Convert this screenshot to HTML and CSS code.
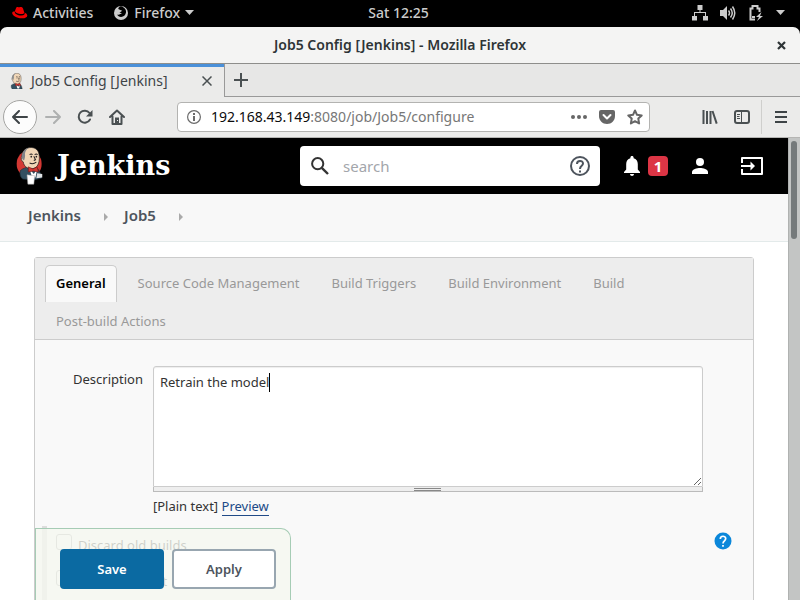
FILE: index.html
```html
<!DOCTYPE html>
<html lang="en">
<head>
<meta charset="utf-8">
<title>Job5 Config [Jenkins]</title>
<link rel="stylesheet" href="styles.css">
</head>
<body>
<header class="topbar">
  <div class="topbar-left">
    <button class="top-item activities" type="button">
      <svg width="16" height="16" viewBox="0 0 16 16"><path fill="#e00" d="M4 3.2c.5-1.600 1.700-1.400 3-.8 1.500-.6 3.300-.4 4 1l1.300 4.200c-.5 1.900-3.200 1.700-5.500 1.100C4.700 8.100 2.700 7 3 5.700z"/><path fill="#e00" d="M2.700 6.200c-1.500.2-2.500.6-2.500 1.700 0 2.300 4.200 5.200 9.600 5.400 3.200.1 5.500-.9 5.500-2.800 0-1.300-1.100-2.300-2.700-3.100.4 1.600-.5 3.200-3.600 3.100-3.500-.1-6.600-1.900-6.300-4.300z"/></svg>
      Activities
    </button>
    <button class="top-item" type="button">
      <svg width="16" height="16" viewBox="0 0 16 16"><circle cx="8" cy="8" r="7" fill="#ccc"/><path fill="#000" d="M7 1.500c1.500-.4 2.500 0 3.200.7 2 1 3.200 3 2.800 5.400-.4 2.700-2.400 4.400-4.900 4.400-2 0-3.300-1-4-2.400 1.300.5 2.300.3 3.100-.5l1.600-.4c-.4-.7-1.400-.8-2.300-1l1.700-1.200 1-.8-1.800-.6C6.600 4.600 5.800 4 5.300 3.900c0-1 .7-1.900 1.700-2.400z"/></svg>
      Firefox
      <svg width="9" height="5" viewBox="0 0 9 5"><path fill="#ccc" d="M0 0h9L4.500 5z"/></svg>
    </button>
  </div>
  <div class="clock">Sat 12:25</div>
  <button class="tray" type="button" aria-label="System menu">
    <svg width="16" height="16" viewBox="0 0 16 16"><path fill="#ccc" d="M5.500 0h5v5H8.500v2H14v4h2v4.500h-5V11h2V8H3v3h2v4.500H0V11h2V7h5.500V5h-2z"/></svg>
    <svg width="16" height="16" viewBox="0 0 16 16"><path fill="#ccc" d="M0 5h3l4-4v14l-4-4H0z"/><path fill="none" stroke="#ccc" stroke-width="1.500" d="M8.500 5.500q2 2.500 0 5M10.500 3.500q3.500 4.500 0 9M12.500 1.500q4.500 6.500 0 13"/></svg>
    <svg width="16" height="16" viewBox="0 0 16 16"><path fill="none" stroke="#ccc" stroke-width="2" d="M7 14.500H2.500v-11h2V1h5v2.500h2V7"/><path fill="#ccc" d="M13.500 7 8 12h3l-2 4 6-5h-3zM4 11h3v2H4z"/></svg>
    <svg width="9" height="5" viewBox="0 0 9 5"><path fill="#ccc" d="M0 0h9L4.500 5z"/></svg>
  </button>
</header>

<div class="titlebar">
  <span></span>
  <div class="window-title">Job5 Config [Jenkins] - Mozilla Firefox</div>
  <button class="close-window" type="button" aria-label="Close window"><svg width="9" height="9" viewBox="0 0 9 9"><path stroke="#2e3436" stroke-width="2.200" d="M1 1l7 7M8 1 1 8"/></svg></button>
</div>

<div class="tabstrip">
  <div class="browser-tab">
    <svg width="16" height="16" viewBox="3 0 30 37"><use href="#butler"/></svg>
    <span class="tab-name">Job5 Config [Jenkins]</span>
    <button type="button" aria-label="Close tab"><svg width="10" height="10" viewBox="0 0 10 10"><path stroke="#4a5052" stroke-width="1.500" d="M.5.5l9 9M9.500.5l-9 9"/></svg></button>
  </div>
  <button class="new-tab" type="button" aria-label="New tab"><svg width="14" height="14" viewBox="0 0 14 14"><path stroke="#4a5052" stroke-width="2" d="M7 0v14M0 7h14"/></svg></button>
</div>

<nav class="toolbar">
  <div class="nav-buttons">
    <button class="back" type="button" aria-label="Back"><svg width="16" height="14" viewBox="0 0 16 14"><path fill="none" stroke="#3e4447" stroke-width="2" stroke-linecap="round" stroke-linejoin="round" d="M7 1 1 7l6 6M1 7h14"/></svg></button>
    <button class="forward" type="button" aria-label="Forward"><svg width="16" height="14" viewBox="0 0 16 14"><path fill="none" stroke="#aeb0b0" stroke-width="2" stroke-linecap="round" stroke-linejoin="round" d="M9 1l6 6-6 6M15 7H1"/></svg></button>
    <button type="button" aria-label="Reload"><svg width="16" height="16" viewBox="0 0 16 16"><path fill="none" stroke="#4a5052" stroke-width="2" stroke-linecap="round" d="M13 10.500A6 6 0 1 1 12.500 4"/><path fill="#4a5052" d="M15.500 1v6.500H9z"/></svg></button>
    <button type="button" aria-label="Home"><svg width="16" height="16" viewBox="0 0 16 16"><path fill="none" stroke="#4a5052" stroke-width="2" stroke-linecap="round" stroke-linejoin="round" d="M1 8l7-6.500L15 8M3.500 7.500V15h9V7.500"/><path fill="#4a5052" d="M6 8.500h4V15H6z"/><path fill="#ebebea" d="M8 11h1v1H8z"/></svg></button>
  </div>
  <div class="urlbar">
    <svg width="14" height="14" viewBox="0 0 14 14"><circle cx="7" cy="7" r="6.400" fill="none" stroke="#6b6b6b" stroke-width="1.200"/><path fill="#6b6b6b" d="M6 6h2v5H6zM6 3h2v2H6z"/></svg>
    <div class="url">192.168.43.149<span>:8080/job/Job5/configure</span></div>
    <svg width="16" height="4" viewBox="0 0 16 4"><g fill="#666"><circle cx="2" cy="2" r="2"/><circle cx="8" cy="2" r="2"/><circle cx="14" cy="2" r="2"/></g></svg>
    <svg width="16" height="14" viewBox="0 0 16 14"><path fill="#666" d="M2 0h12q2 0 2 2v4c0 4.500-3.500 8-8 8S0 10.500 0 6V2q0-2 2-2z"/><path fill="none" stroke="#fff" stroke-width="2" stroke-linecap="round" stroke-linejoin="round" d="M4.500 5 8 8.500 11.500 5"/></svg>
    <svg width="16" height="16" viewBox="0 0 16 16"><path fill="none" stroke="#666" stroke-width="2" stroke-linejoin="round" d="M8 1.500l2 4.300 4.700.6-3.400 3.200.8 4.900L8 12.200l-4.100 2.300.8-4.900L1.300 6.400 6 5.800z"/></svg>
  </div>
  <div class="tools">
    <svg width="16" height="14" viewBox="0 0 16 14"><path fill="none" stroke="#4a5052" stroke-width="2" d="M1.500 0v14M5 1v13M8.500 1v13M10.500 1l4.200 12.600"/></svg>
    <svg width="16" height="14" viewBox="0 0 16 14"><rect x="1" y="1" width="14" height="12" rx="2" fill="none" stroke="#4a5052" stroke-width="2"/><path fill="none" stroke="#4a5052" d="M7.500 1v12M3 4.500h3M3 6.500h2.500M3 8.500h3"/></svg>
    <button class="menu" type="button" aria-label="Menu"><svg width="12" height="12" viewBox="0 0 12 12"><path stroke="#3e4447" stroke-width="2" d="M0 1h12M0 6h12M0 11h12"/></svg></button>
  </div>
</nav>

<div class="viewport">
  <main class="page">
    <div class="jenkins-header">
      <a class="logo" href="#">
        <svg width="28" height="38" viewBox="0 0 33 45">
          <ellipse cx="15.500" cy="20" rx="14.800" ry="16" fill="#d33833"/>
          <g id="butler">
            <path fill="#335061" stroke="#1c2c36" stroke-width=".8" d="M5 28c3-3 7-3 9-5l9 1c3 2 6 4 7 13l-9 2-13-1c-3-2-4-6-3-10z"/>
            <path fill="#f0d6b7" stroke="#231f20" stroke-width=".8" d="M7 10C8 3 13 .5 18 .6c6 .2 9 4 9.500 10 .4 5-.5 9-2.500 12-3 3.500-8 4-12 2-3-2-4-4-4.500-7C6 17 5.500 13 7 10z"/>
            <path fill="#81858a" d="M7.500 7.500C9 4 12 1.500 15 1c-3 2-4 4-4.500 7 .5 3 0 5-1 8-2.500-1-3.500-4-2-8.500z"/>
            <path fill="none" stroke="#231f20" stroke-width="1.200" d="M16 9q2-1.500 3.500 0M22 9q2-1.500 3.500 0M21 11l2 4-2 1M16 19q4 2 8-1"/>
            <circle cx="18" cy="11.500" r="1" fill="#231f20"/><circle cx="24" cy="11.500" r="1" fill="#231f20"/>
            <path fill="#fff" d="M16 26l5 6 4-6-2 10h-4z"/>
            <path fill="#d33833" stroke="#6b1512" stroke-width=".7" d="M14.500 23.500l5.500 2.500 5-2.500 1.500 6-6-1-6 1z"/>
          </g>
          <path fill="#fff" stroke="#aaa" stroke-width=".6" d="M13 33l9 1-1 10h-7z"/>
          <path fill="#dfe3e5" d="M25 31l6 1v4l-7 1z"/>
        </svg>
        <span>Jenkins</span>
      </a>
      <div class="search">
        <svg width="18" height="18" viewBox="0 0 18 18"><circle cx="6.700" cy="6.700" r="5.600" fill="none" stroke="#333" stroke-width="2"/><path stroke="#333" stroke-width="2.400" d="M10.800 10.800l6.200 6.200"/></svg>
        <input type="text" placeholder="search" aria-label="Search">
        <svg width="20" height="20" viewBox="0 0 20 20"><circle cx="10" cy="10" r="9" fill="none" stroke="#4d545d" stroke-width="2"/><path fill="none" stroke="#4d545d" stroke-width="2" d="M7 8c0-4 6-4 6-.5C13 10 10 9.500 10 13M10 14.500v2"/></svg>
      </div>
      <div class="user-tools">
        <svg width="16" height="20" viewBox="0 0 16 20"><path fill="#fff" d="M8 0c1 0 1.600.7 1.600 1.600v.6c2.700.7 4.200 3 4.200 5.800v5.500L16 16v1H0v-1l2.200-2.500V8c0-2.800 1.500-5.100 4.200-5.800v-.6C6.400.7 7 0 8 0zM6 18h4c0 1-1 2-2 2s-2-1-2-2z"/></svg>
        <span class="alerts">1</span>
        <svg class="person" width="16" height="16" viewBox="0 0 16 16"><circle cx="8" cy="4" r="4" fill="#fff"/><path fill="#fff" d="M0 16v-2c0-2.600 5-4 8-4s8 1.400 8 4v2z"/></svg>
        <svg class="logout" width="22" height="18" viewBox="0 0 22 18"><path fill="none" stroke="#fff" stroke-width="2" stroke-linejoin="round" d="M1 6V1h20v16H1v-5M0 9h12"/><path fill="#fff" d="M9.500 4.500 14 9l-4.500 4.500z"/></svg>
      </div>
    </div>

    <nav class="breadcrumbs">
      <a href="#">Jenkins</a><i></i><a href="#">Job5</a><i></i>
    </nav>

    <form class="config">
      <div class="config-tabs">
        <a class="active" href="#">General</a>
        <a href="#">Source Code Management</a>
        <a href="#">Build Triggers</a>
        <a href="#">Build Environment</a>
        <a href="#">Build</a>
        <a href="#">Post-build Actions</a>
      </div>
      <div class="description-row">
        <label for="description">Description</label>
        <div class="editor">
          <div class="text-wrap">
            <textarea id="description" spellcheck="false">Retrain the model</textarea>
            <span class="caret"></span>
          </div>
          <div class="drag-handle"><span></span></div>
          <div class="format">[Plain text] <a href="#">Preview</a></div>
        </div>
      </div>
      <div class="options">
        <div class="option">
          <input type="checkbox" id="discard"><label for="discard">Discard old builds</label>
          <a class="help" href="#" aria-label="Help"><svg width="18" height="18" viewBox="0 0 18 18"><circle cx="9" cy="9" r="8.500" fill="#0b87da"/><path fill="none" stroke="#fff" stroke-width="1.700" d="M6.300 7c0-3.700 5.400-3.500 5.400-.4C11.700 8.800 9 8.800 9 11.500M9 13v1.800"/></svg></a>
        </div>
        <div class="option"><input type="checkbox" id="github"><label for="github">GitHub project</label></div>
      </div>
    </form>

    <div class="sticky-actions">
      <button class="save" type="button">Save</button>
      <button class="apply" type="button">Apply</button>
    </div>
  </main>
  <div class="scrollbar"><div class="thumb"></div></div>
</div>
</body>
</html>
```
FILE: styles.css
```css
* { box-sizing: border-box; }
body {
  margin: 0;
  height: 100vh;
  display: flex;
  flex-direction: column;
  overflow: hidden;
  background: #000;
  color: #333;
  font: 13px/20px "Noto Sans", sans-serif;
}
button { font: inherit; color: inherit; background: none; border: 0; padding: 0; }
a { color: inherit; text-decoration: none; }
svg { display: block; flex: none; }

.topbar, .titlebar {
  display: grid;
  grid-template-columns: 1fr auto 1fr;
  align-items: center;
  flex: none;
}
.topbar { height: 27px; color: #ccc; font-size: 14px; font-weight: 500; padding: 0 15px 2px 12px; }
.topbar-left { display: flex; gap: 20px; }
.top-item { display: flex; align-items: center; gap: 5px; }
.tray { display: flex; align-items: center; gap: 12px; justify-self: end; }

.titlebar {
  height: 37px;
  padding: 0 14px;
  background: #f4f4f3;
  border-bottom: 1px solid #8e8e8b;
  border-radius: 7px 7px 0 0;
}
.window-title { font-size: 14px; font-weight: 600; color: #2e3436; }
.close-window { justify-self: end; }

.tabstrip { display: flex; flex: none; height: 33px; background: #e7e7e6; }
.browser-tab {
  display: flex;
  align-items: center;
  gap: 6px;
  width: 224px;
  padding: 0 12px 2px 9px;
  background: #ebebea;
  border-top: 3px solid #4a90d9;
  font-size: 14px;
  color: #3e4447;
}
.tab-name { flex: 1; }
.new-tab { flex: 1; padding-left: 9px; border: solid #999; border-width: 0 0 1px 1px; }

.toolbar {
  display: flex;
  flex: none;
  align-items: center;
  height: 41px;
  background: #ebebea;
  border-bottom: 1px solid #b5b5b3;
}
.nav-buttons { display: flex; align-items: center; gap: 16px; width: 177px; padding-left: 3px; }
.back { display: grid; place-items: center; width: 34px; height: 34px; border: 1px solid #a5a5a3; border-radius: 50%; background: #fcfcfc; }
.forward { margin-left: -8px; }
.urlbar {
  display: flex;
  align-items: center;
  gap: 12px;
  flex: 1;
  height: 30px;
  padding: 0 6px 0 9px;
  background: #fff;
  border: 1px solid #b3b3b1;
  border-radius: 4px;
}
.url { flex: 1; margin-left: -2px; color: #0c0c0d; font-size: 14px; }
.url span { color: #777; }
.tools { display: flex; align-items: center; gap: 16px; width: 150px; padding-left: 52px; }
.menu { height: 34px; margin-left: -5px; padding-left: 13px; border-left: 1px solid #cfcfcd; }

.viewport { display: flex; flex: 1; min-height: 0; }
.page { position: relative; flex: 1; overflow: hidden; background: #fff; }
.scrollbar { width: 12px; padding: 3px 2px; background: #c3c5c4; border-left: 1px solid #b0b2b1; }
.thumb { width: 6px; height: 98px; border-radius: 3px; background: #757a7b; }

.jenkins-header { display: flex; align-items: center; height: 56px; padding: 0 25px 0 16px; background: #000; }
.logo { display: flex; flex: none; align-items: center; gap: 13px; width: 284px; color: #fff; font: 700 27px/38px "DejaVu Serif", serif; }
.search {
  display: flex;
  align-items: center;
  gap: 14px;
  flex: 1;
  min-width: 0;
  height: 40px;
  padding: 0 10px 0 11px;
  border-radius: 4px;
  background: #fff;
}
.search input { flex: 1; min-width: 0; padding: 0; border: 0; outline: 0; background: none; font: 15px/24px "Noto Sans", sans-serif; }
.search input::placeholder { color: #a3a6ab; }
.user-tools { display: flex; flex: none; align-items: center; gap: 8px; width: 163px; padding-left: 24px; }
.alerts { width: 20px; height: 20px; border-radius: 4px; background: #dc3545; color: #fff; font-size: 15px; font-weight: 700; text-align: center; }
.person { margin-left: 16px; }
.logout { margin-left: auto; }

.breadcrumbs {
  display: flex;
  align-items: center;
  height: 48px;
  padding: 0 28px 6px;
  background: #f8f8f8;
  border-bottom: 1px solid #e3eaea;
  color: #4d545d;
  font-size: 15px;
  font-weight: 600;
}
.breadcrumbs i { margin: 5px 16px 0 23px; border: 4px solid transparent; border-left-color: #aaa; border-right: 0; }

.config { margin: 15px 34px 0; border: 1px solid #ccc; border-radius: 3px; background: #f9f9f9; height: 600px; }
.config-tabs { display: flex; flex-wrap: wrap; gap: 1px 10px; padding: 7px 10px 0; height: 82px; align-content: flex-start; background: #ededed; border-bottom: 1px solid #ccc; }
.config-tabs a { height: 37px; padding: 7px 10px; border: 1px solid transparent; border-bottom: 0; border-radius: 5px 5px 0 0; color: #999; }
.config-tabs .active { background: #f9f9f9; border-color: #ccc; color: #000; font-weight: 600; }

.description-row { display: flex; gap: 10px; padding: 26px 50px 0 38px; }
.description-row label { padding-top: 3px; }
.editor { flex: 1; }
.text-wrap { position: relative; }
textarea {
  display: block;
  width: 100%;
  height: 121px;
  padding: 5px 6px;
  border: 1px solid #ccc;
  border-radius: 3px 3px 0 0;
  background: #fff;
  box-shadow: inset 0 1px 1px #eee;
  color: #333;
  font: 13px/20px "Noto Sans", sans-serif;
  resize: both;
  outline: 0;
}
.caret { position: absolute; left: 116px; top: 7px; width: 1px; height: 19px; background: #000; }
.drag-handle { height: 5px; display: flex; justify-content: center; background: #eee; border: 1px solid #bbb; border-top: 0; }
.drag-handle span { width: 27px; height: 3px; border: solid #888; border-width: 1px 0; margin-top: 1px; }
.format { padding-top: 4px; }
.format a { color: #204a87; border-bottom: 1px solid #204a87; }

.options { margin: 10px 0 0 7px; padding: 0 21px 0 10px; border-left: 5px solid #ddd; height: 100px; }
.option { display: flex; align-items: center; height: 36px; }
.option input { appearance: none; width: 16px; height: 16px; margin: -4px 6px 0 -1px; border: 1px solid #aaa; border-radius: 3px; background: #fafafa; }
.option label { flex: 1; padding-top: 2px; color: #333; }
.help { margin-top: -6px; }

.sticky-actions {
  position: absolute;
  left: 35px;
  bottom: 0;
  display: flex;
  gap: 8px;
  padding: 20px 14px 11px 24px;
  border: 1px solid #a6ccb5;
  border-width: 1px 1px 0;
  border-radius: 0 10px 0 0;
  background: rgba(245, 248, 240, .8);
}
.sticky-actions button { width: 104px; height: 40px; border-radius: 4px; font-weight: 600; }
.save { background: #0b6aa2; color: #fff; }
.apply { background: #fff; border: 2px solid #98a6b0; color: #4d545d; }
```
